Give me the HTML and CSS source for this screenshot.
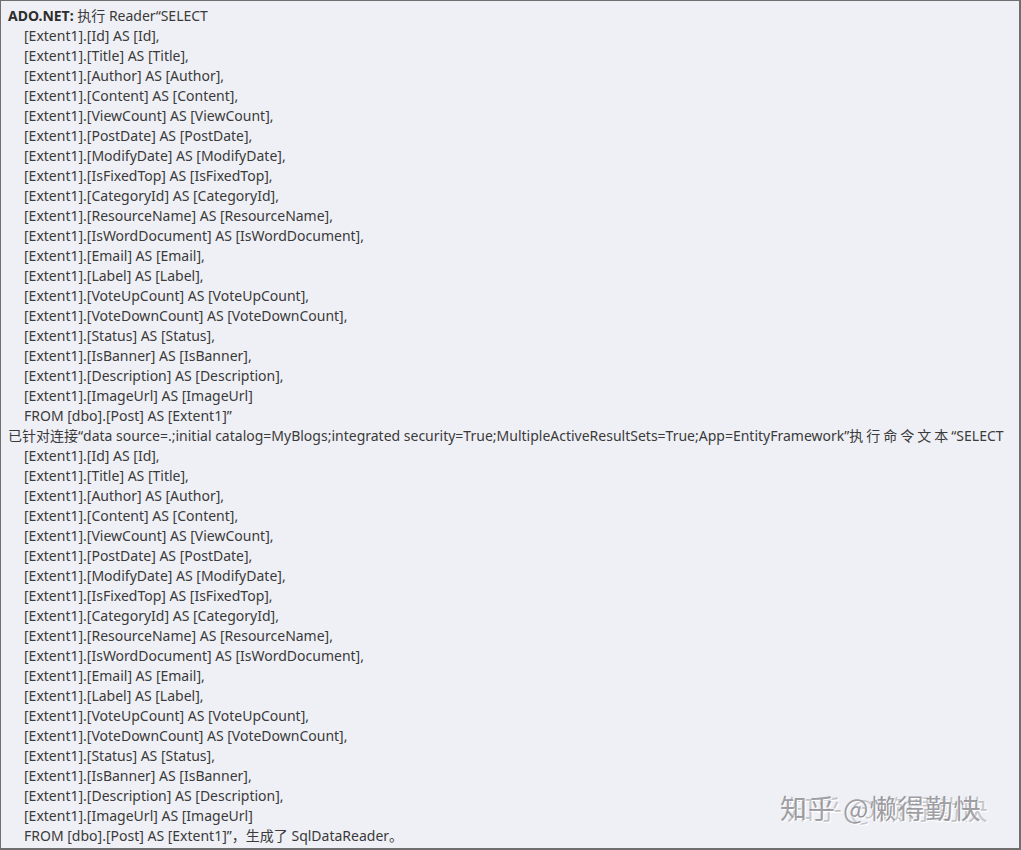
FILE: index.html
```html
<!DOCTYPE html>
<html lang="en">
<head>
    <meta charset="utf-8" />
    <title>ADO.NET log</title>
    <link rel="stylesheet" href="styles.css">
</head>
<body>
    <div class="log">
        <div class="line"><b>ADO.NET:</b> 执行 Reader“SELECT</div>
        <div class="line sub">[Extent1].[Id] AS [Id],</div>
        <div class="line sub">[Extent1].[Title] AS [Title],</div>
        <div class="line sub">[Extent1].[Author] AS [Author],</div>
        <div class="line sub">[Extent1].[Content] AS [Content],</div>
        <div class="line sub">[Extent1].[ViewCount] AS [ViewCount],</div>
        <div class="line sub">[Extent1].[PostDate] AS [PostDate],</div>
        <div class="line sub">[Extent1].[ModifyDate] AS [ModifyDate],</div>
        <div class="line sub">[Extent1].[IsFixedTop] AS [IsFixedTop],</div>
        <div class="line sub">[Extent1].[CategoryId] AS [CategoryId],</div>
        <div class="line sub">[Extent1].[ResourceName] AS [ResourceName],</div>
        <div class="line sub">[Extent1].[IsWordDocument] AS [IsWordDocument],</div>
        <div class="line sub">[Extent1].[Email] AS [Email],</div>
        <div class="line sub">[Extent1].[Label] AS [Label],</div>
        <div class="line sub">[Extent1].[VoteUpCount] AS [VoteUpCount],</div>
        <div class="line sub">[Extent1].[VoteDownCount] AS [VoteDownCount],</div>
        <div class="line sub">[Extent1].[Status] AS [Status],</div>
        <div class="line sub">[Extent1].[IsBanner] AS [IsBanner],</div>
        <div class="line sub">[Extent1].[Description] AS [Description],</div>
        <div class="line sub">[Extent1].[ImageUrl] AS [ImageUrl]</div>
        <div class="line sub">FROM [dbo].[Post] AS [Extent1]”</div>
        <div class="line">已针对连接“data source=.;initial catalog=MyBlogs;integrated security=True;MultipleActiveResultSets=True;App=EntityFramework”<span class="wide">执行命令文本</span>“SELECT</div>
        <div class="line sub">[Extent1].[Id] AS [Id],</div>
        <div class="line sub">[Extent1].[Title] AS [Title],</div>
        <div class="line sub">[Extent1].[Author] AS [Author],</div>
        <div class="line sub">[Extent1].[Content] AS [Content],</div>
        <div class="line sub">[Extent1].[ViewCount] AS [ViewCount],</div>
        <div class="line sub">[Extent1].[PostDate] AS [PostDate],</div>
        <div class="line sub">[Extent1].[ModifyDate] AS [ModifyDate],</div>
        <div class="line sub">[Extent1].[IsFixedTop] AS [IsFixedTop],</div>
        <div class="line sub">[Extent1].[CategoryId] AS [CategoryId],</div>
        <div class="line sub">[Extent1].[ResourceName] AS [ResourceName],</div>
        <div class="line sub">[Extent1].[IsWordDocument] AS [IsWordDocument],</div>
        <div class="line sub">[Extent1].[Email] AS [Email],</div>
        <div class="line sub">[Extent1].[Label] AS [Label],</div>
        <div class="line sub">[Extent1].[VoteUpCount] AS [VoteUpCount],</div>
        <div class="line sub">[Extent1].[VoteDownCount] AS [VoteDownCount],</div>
        <div class="line sub">[Extent1].[Status] AS [Status],</div>
        <div class="line sub">[Extent1].[IsBanner] AS [IsBanner],</div>
        <div class="line sub">[Extent1].[Description] AS [Description],</div>
        <div class="line sub">[Extent1].[ImageUrl] AS [ImageUrl]</div>
        <div class="line sub">FROM [dbo].[Post] AS [Extent1]”，生成了 SqlDataReader。</div>

        <!-- watermark, doubled via shadow -->
        <div class="mark">知乎 @懒得勤快</div>
    </div>
</body>
</html>
```

FILE: styles.css
```css
html, body {
    margin: 0;
    padding: 0;
}

body {
    width: 1021px;
    height: 850px;
    overflow: hidden;
}

/* log box */
.log {
    position: relative;
    box-sizing: border-box;
    width: 1021px;
    height: 850px;
    padding: 5px 0 0 7px;
    background: #eff0f5;
    border: 1px solid #6f6f6f;
    border-right-width: 2px;
    border-bottom-width: 2px;
    color: #3a3a3a;
    font-family: "Noto Sans", "Noto Sans CJK SC", sans-serif;
    font-size: 14px;
    overflow: hidden;
}

.line {
    height: 20px;
    line-height: 20px;
    white-space: nowrap;
}

.line b {
    font-weight: bold;
    color: #2d2d2d;
}

.sub {
    padding-left: 16px;
}

.wide {
    letter-spacing: 3px;
}

/* watermark */
.mark {
    position: absolute;
    left: 779px;
    top: 792px;
    font-family: "Noto Sans CJK SC", sans-serif;
    font-size: 27px;
    line-height: 30px;
    letter-spacing: 1px;
    color: rgba(130, 130, 136, 0.75);
    text-shadow: 1px 1px 0 #ffffff, 7px 1px 0 rgba(150, 150, 156, 0.5), 8px 2px 0 #ffffff;
    white-space: nowrap;
}
```
